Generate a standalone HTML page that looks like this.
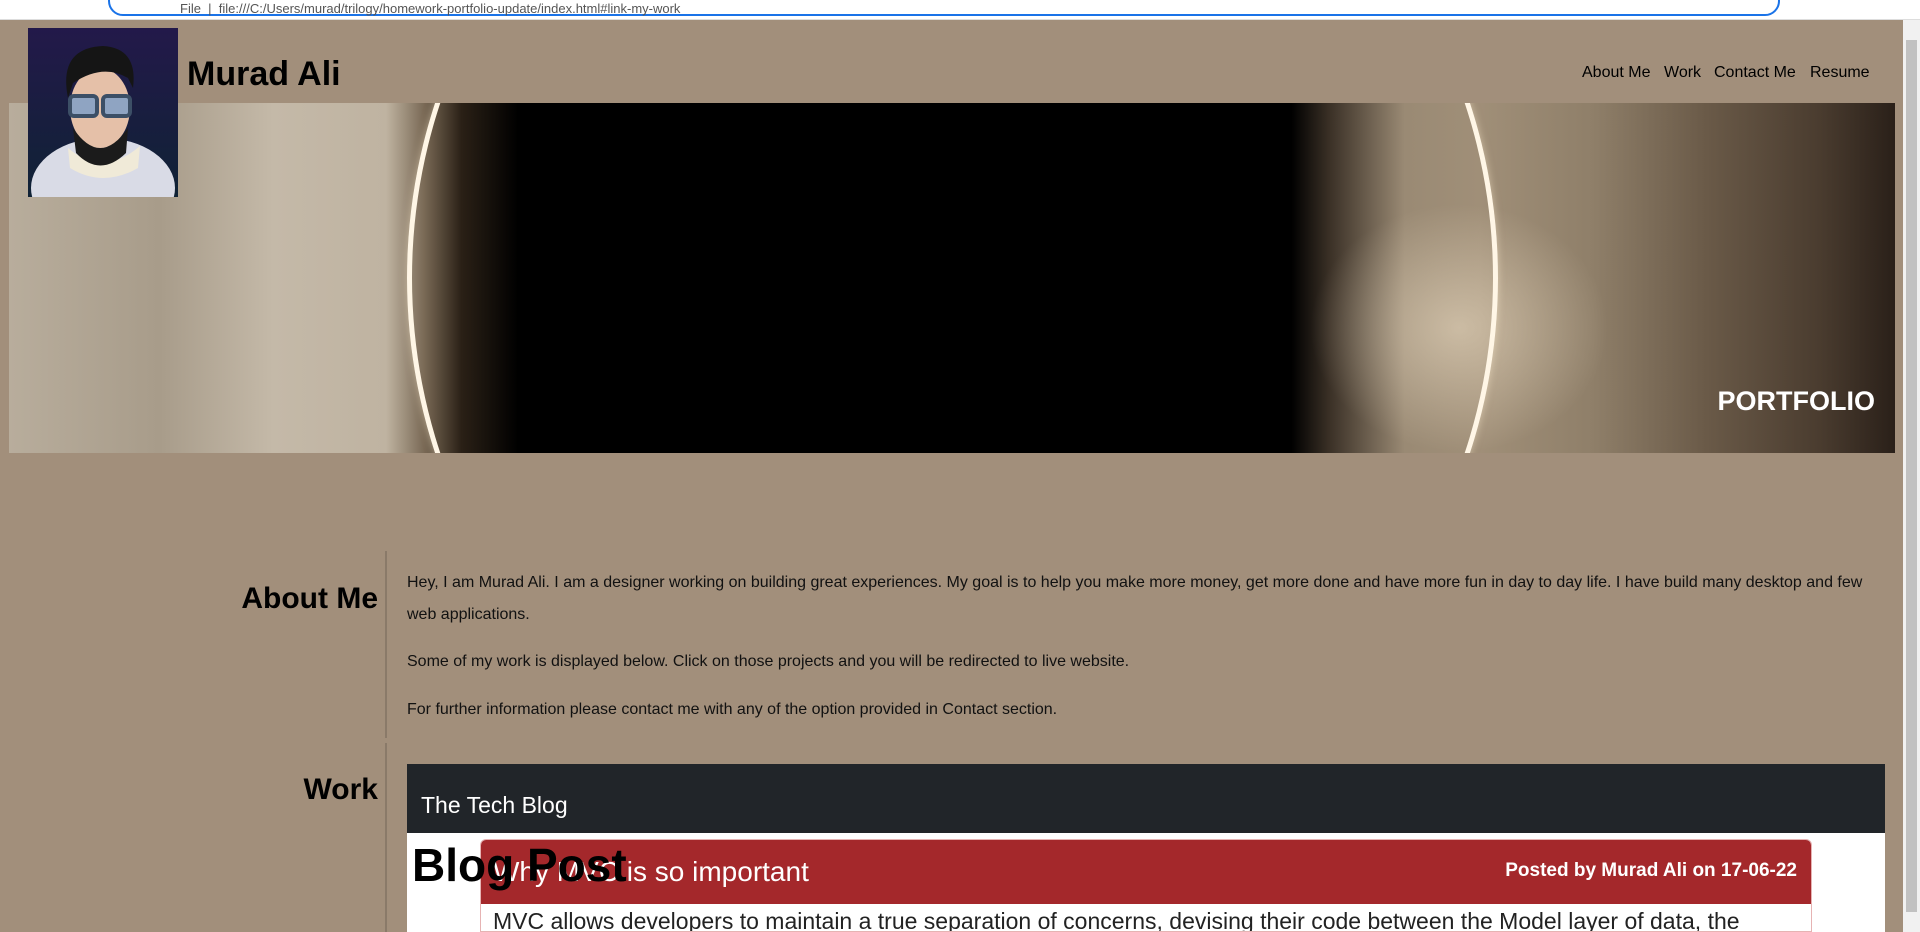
<!DOCTYPE html>
<html><head><meta charset="utf-8"><style>
*{margin:0;padding:0;box-sizing:border-box}
body{width:1920px;height:932px;overflow:hidden;background:#a28f7b;font-family:"Liberation Sans",sans-serif;position:relative}
.chrome{position:absolute;left:0;top:0;width:1920px;height:20px;background:#fff;border-bottom:1px solid #ddd}
.addr{position:absolute;left:108px;top:-14px;width:1672px;height:30px;border:2px solid #1a73e8;border-radius:15px;font-size:13px;color:#555;padding:14px 0 0 70px;line-height:14px}
.scroll{position:absolute;left:1903px;top:20px;width:17px;height:912px;background:#f1f1f1}
.thumb{position:absolute;left:1906px;top:40px;width:11px;height:872px;background:#c1c1c1}
.avatar{position:absolute;left:28px;top:28px;width:150px;height:169px;background:linear-gradient(#23194a,#0f2235);z-index:3;overflow:hidden}
h1{position:absolute;left:187px;top:55px;font-size:34px;font-weight:bold;color:#000}
.nav{position:absolute;top:64px;font-size:16px;color:#000}
.hero{position:absolute;left:9px;top:103px;width:1886px;height:350px;overflow:hidden;background:#000}
.pf{position:absolute;right:20px;top:283px;color:#fff;font-size:27px;font-weight:bold}
.line{position:absolute;left:385px;width:2px;background:#8a7a69}
.h2{position:absolute;font-size:30px;font-weight:bold;color:#000;text-align:right;right:1542px}
p{position:absolute;left:407px;font-size:16px;color:#111;line-height:32px;width:1485px}
.dark{position:absolute;left:407px;top:764px;width:1478px;height:69px;background:#212529;color:#fff;font-size:23px;padding:28px 0 0 14px}
.white{position:absolute;left:407px;top:833px;width:1478px;height:99px;background:#fff}
.card{position:absolute;left:480px;top:839px;width:1332px;height:93px;border:1px solid #e6b3b3;border-radius:6px 6px 0 0;overflow:hidden;background:#fff}
.ch{height:64px;background:#a4282b;color:#fff;position:relative}
.ct{position:absolute;left:12px;top:16px;font-size:28px}
.cp{position:absolute;right:14px;top:20px;font-size:19px;font-weight:bold}
.cb{font-size:23px;color:#222;padding:4px 12px}
.bp{position:absolute;left:412px;top:838px;font-size:46px;font-weight:bold;color:#000;z-index:5}
</style></head><body>
<div class="chrome"><div class="addr">File &nbsp;|&nbsp; file:///C:/Users/murad/trilogy/homework-portfolio-update/index.html#link-my-work</div></div>
<div class="avatar"><svg width="150" height="169" viewBox="0 0 150 169">
<ellipse cx="75" cy="160" rx="72" ry="50" fill="#d9dbe6"/>
<path d="M40 120 Q75 150 112 118 L110 140 Q75 160 42 140Z" fill="#f0ead8"/>
<ellipse cx="72" cy="80" rx="30" ry="40" fill="#e5c0a8"/>
<path d="M40 70 Q30 20 75 18 Q110 20 105 60 L100 50 Q75 35 45 55Z" fill="#151515"/>
<path d="M45 100 Q72 140 100 100 L98 125 Q72 150 48 125Z" fill="#1b1b1b"/>
<rect x="42" y="68" width="27" height="20" rx="4" fill="#8fa4c2" stroke="#3c4f66" stroke-width="4"/>
<rect x="75" y="68" width="27" height="20" rx="4" fill="#8fa4c2" stroke="#3c4f66" stroke-width="4"/>
</svg></div>
<h1>Murad Ali</h1>
<div class="nav" style="left:1582px">About Me</div>
<div class="nav" style="left:1664px">Work</div>
<div class="nav" style="left:1714px">Contact Me</div>
<div class="nav" style="left:1810px">Resume</div>
<div class="hero">
<div style="position:absolute;inset:0;background:linear-gradient(90deg,#b8ad9c 0%,#a89c8a 8%,#c4b9a8 14%,#bfb3a1 20%,#7a6a56 22%,#2a2016 24%,#000 27%,#000 68%,#3a3026 70%,#9a8a74 74%,#a08f78 78%,#8f7f69 84%,#6a5a48 90%,#4a3c2f 96%,#2a2019 100%)"></div>
<div style="position:absolute;left:1300px;top:100px;width:300px;height:250px;background:radial-gradient(ellipse,rgba(240,225,200,.55),rgba(0,0,0,0) 70%)"></div>
<div style="position:absolute;left:398px;top:-378px;width:1091px;height:1106px;border-radius:50%;border:5px solid #fff6e6;box-shadow:0 0 8px rgba(255,240,210,.5)"></div>
<div class="pf">PORTFOLIO</div>
</div>
<div class="line" style="top:551px;height:187px"></div>
<div class="line" style="top:743px;height:189px"></div>
<div class="h2" style="top:582px">About Me</div>
<div class="h2" style="top:773px">Work</div>
<p style="top:567px">Hey, I am Murad Ali. I am a designer working on building great experiences. My goal is to help you make more money, get more done and have more fun in day to day life. I have build many desktop and few web applications.</p>
<p style="top:646px">Some of my work is displayed below. Click on those projects and you will be redirected to live website.</p>
<p style="top:694px">For further information please contact me with any of the option provided in Contact section.</p>
<div class="dark">The Tech Blog</div>
<div class="white"></div>
<div class="card"><div class="ch"><div class="ct">Why MVC is so important</div><div class="cp">Posted by Murad Ali on 17-06-22</div></div>
<div class="cb">MVC allows developers to maintain a true separation of concerns, devising their code between the Model layer of data, the</div></div>
<div class="bp">Blog Post</div>
<div class="scroll"></div><div class="thumb"></div>
</body></html>
